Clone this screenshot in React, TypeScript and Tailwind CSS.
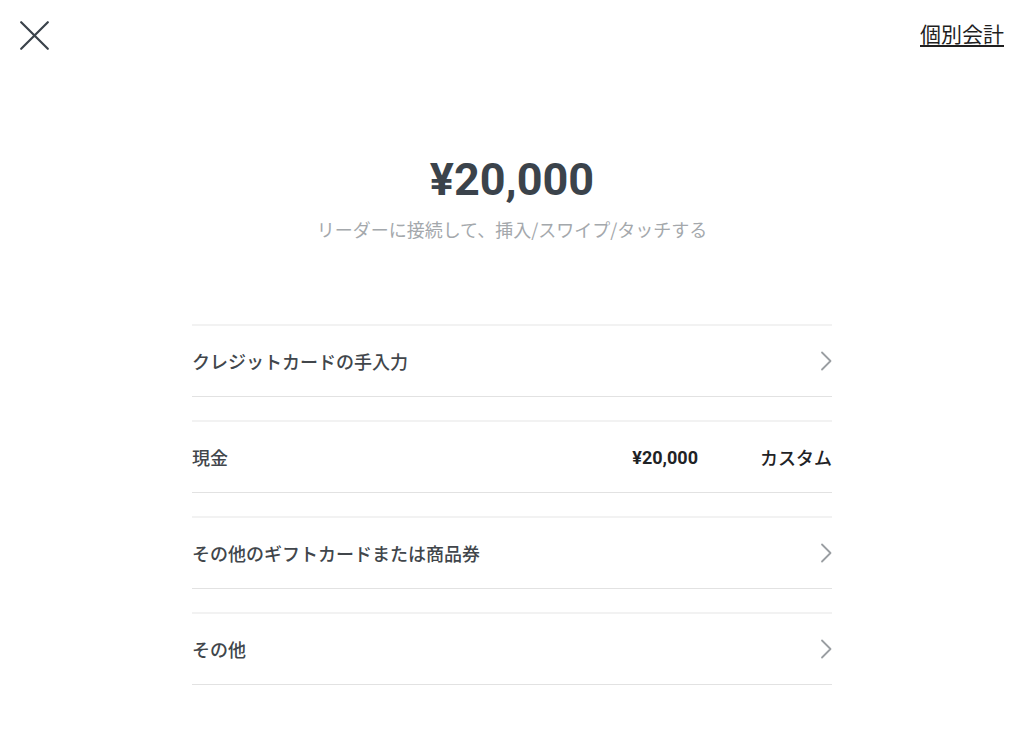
import React from "react";

const font = { fontFamily: '"Noto Sans CJK JP", "Noto Sans", sans-serif' };
const latin = { fontFamily: 'Roboto, "Noto Sans CJK JP", sans-serif' };

function Chevron() {
  return (
    <svg width="12" height="20" viewBox="0 0 12 20" fill="none">
      <path d="M2 1.5 L10.5 10 L2 18.5" stroke="#9a9ea2" strokeWidth="1.8" strokeLinecap="round" strokeLinejoin="round" />
    </svg>
  );
}

function Row({ label, right }: { label: string; right?: React.ReactNode }) {
  return (
    <div className="flex h-[73px] items-center justify-between border-t-2 border-b border-t-[#f2f2f2] border-b-[#e2e2e2]">
      <span className="text-[18px] font-medium text-[#41464b]">{label}</span>
      {right ?? <Chevron />}
    </div>
  );
}

export default function App() {
  return (
    <div className="h-[748px] w-[1024px] bg-white" style={font}>
      <div className="flex items-start justify-between px-5 pt-[21px]">
        <svg width="29" height="29" viewBox="0 0 29 29" fill="none">
          <path d="M1.2 1.2 L27.8 27.8 M27.8 1.2 L1.2 27.8" stroke="#3b434b" strokeWidth="2.2" strokeLinecap="round" />
        </svg>
        <a className="mt-[-3px] text-[21px] leading-[30px] text-[#1f1f1f] underline underline-offset-[3px]">個別会計</a>
      </div>
      <div className="mt-[104px] flex flex-col items-center">
        <div className="text-[45px] font-bold leading-[52px] text-[#3b434b]" style={latin}>¥20,000</div>
        <div className="mt-[11px] text-[18px] leading-[24px] text-[#a4a8ac]">リーダーに接続して、挿入/スワイプ/タッチする</div>
      </div>
      <div className="mx-auto mt-[83px] flex w-[640px] flex-col gap-[23px]">
        <Row label="クレジットカードの手入力" />
        <Row
          label="現金"
          right={
            <div className="flex items-center gap-[62px]">
              <span className="text-[18px] font-bold text-[#1f2326]" style={latin}>¥20,000</span>
              <span className="text-[18px] font-medium text-[#1f2326]">カスタム</span>
            </div>
          }
        />
        <Row label="その他のギフトカードまたは商品券" />
        <Row label="その他" />
      </div>
    </div>
  );
}
